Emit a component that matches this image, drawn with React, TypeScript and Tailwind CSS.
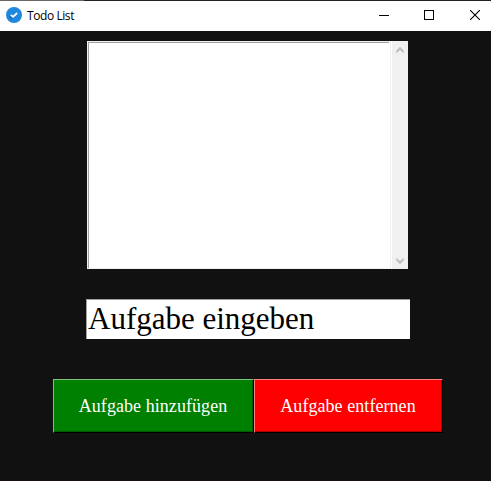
const serif = "font-['Liberation_Serif',serif]";

function TitleBar() {
  return (
    <header className="h-[31px] shrink-0 bg-white">
      <div className="h-px bg-[#231f21]">
        <div className="h-px w-[84px] bg-[#686868]" />
      </div>
      <div className="flex items-start">
        <svg className="mt-[6px] ml-[6px] shrink-0" width="16" height="16" viewBox="0 0 16 16">
          <circle cx="8" cy="8" r="8" fill="#1e88dc" />
          <path d="M4 8.2 6.8 10.2 5.8 12.4 3.6 10Z" fill="#1667ad" />
          <path d="M4.8 7.9 7 9.9 11.2 6" fill="none" stroke="#fff" strokeWidth="1.8" />
        </svg>
        <h1 className="mt-[6px] ml-[5px] font-['Open_Sans',sans-serif] text-[12px] leading-[17px] tracking-[-0.42px] whitespace-nowrap text-black">
          Todo List
        </h1>
        <div className="mt-[9px] mr-[11px] ml-auto flex gap-[35px]">
          <svg width="10" height="10" viewBox="0 0 10 10" shapeRendering="crispEdges">
            <path d="M0 5.5H10" stroke="#000" />
          </svg>
          <svg width="10" height="10" viewBox="0 0 10 10" shapeRendering="crispEdges">
            <rect x=".5" y=".5" width="9" height="9" fill="none" stroke="#000" />
          </svg>
          <svg className="ml-px" width="10" height="10" viewBox="0 0 10 10">
            <path d="M0 0 10 10M10 0 0 10" stroke="#000" strokeWidth="1.1" />
          </svg>
        </div>
      </div>
    </header>
  );
}

function Arrow({ down = false }: { down?: boolean }) {
  return (
    <svg width="8" height="6" viewBox="0 0 8 6">
      <path
        d={down ? "M.5 0 4 3.2 7.5 0V2.6L4 6 .5 2.6Z" : "M.5 6 4 2.8 7.5 6V3.4L4 0 .5 3.4Z"}
        fill="#bfbfbf"
        stroke="#bfbfbf"
        strokeWidth=".4"
      />
    </svg>
  );
}

export default function App() {
  return (
    <div className="flex h-[481px] w-[491px] flex-col overflow-hidden border-b border-[#170f11] bg-[#111111]">
      <TitleBar />
      <main className="flex flex-col">
        <div className="mt-[10px] ml-[87px] flex h-[228px] w-[321px] bg-white">
          <div className="w-[304px] border border-[#f0f0f0]">
            <div className="h-full w-[301px] border-t border-l border-[#a0a0a0] bg-white" />
          </div>
          <div className="ml-px flex w-4 flex-col items-center justify-between bg-[#f0f0f0] pt-[6px] pb-[5px]">
            <Arrow />
            <Arrow down />
          </div>
        </div>
        <div
          className={`mt-[30px] ml-[86px] h-10 w-[324px] border-t border-l border-[#a0a0a0] bg-white pl-px text-[31px] leading-[38px] whitespace-nowrap text-black ${serif}`}
        >
          Aufgabe eingeben
        </div>
        <div className={`mt-10 ml-[53px] flex text-[18px] tracking-[0.06px] text-white ${serif}`}>
          <button className="h-[54px] w-[201px] border border-t-[#80c080] border-r-black border-b-black border-l-[#80c080] bg-[#008000] pr-px whitespace-nowrap shadow-[inset_-1px_-1px_0_#005a00]">
            Aufgabe hinzufügen
          </button>
          <button className="h-[54px] w-[189px] border border-t-[#ff8080] border-r-black border-b-black border-l-[#ff8080] bg-[#ff0000] pr-px whitespace-nowrap shadow-[inset_-1px_-1px_0_#b20000]">
            Aufgabe entfernen
          </button>
        </div>
      </main>
    </div>
  );
}
